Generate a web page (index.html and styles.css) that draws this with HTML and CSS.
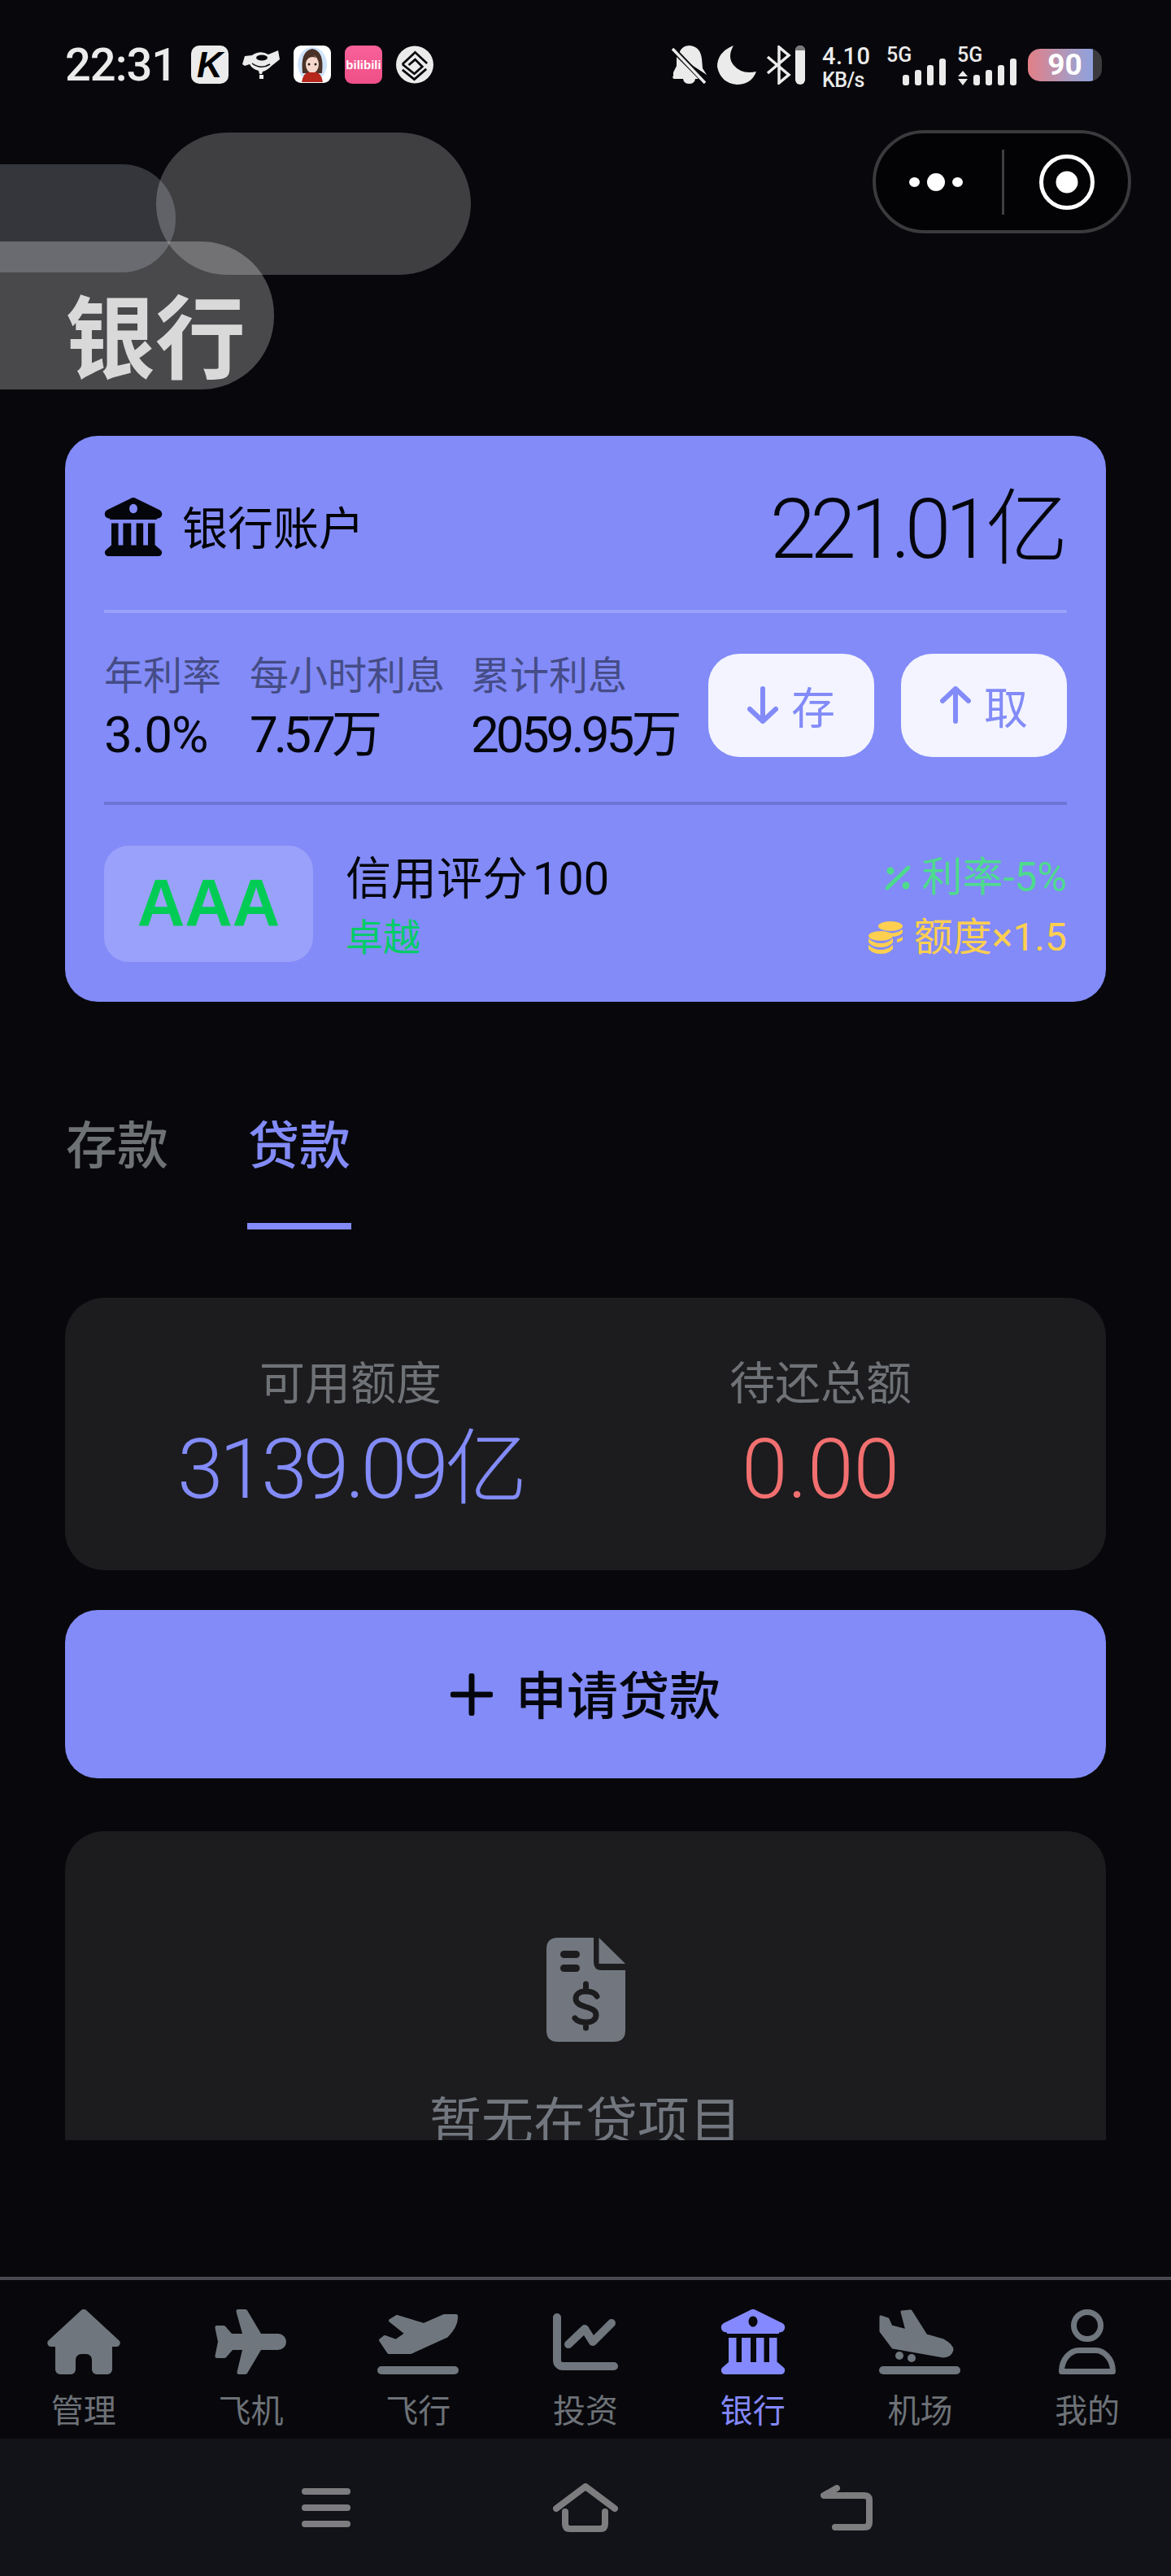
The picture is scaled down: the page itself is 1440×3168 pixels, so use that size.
FILE: index.html
```html
<!DOCTYPE html>
<html lang="zh-CN">
<head>
<meta charset="utf-8">
<title>银行</title>
<link rel="stylesheet" href="styles.css">
</head>
<body>
<svg class="defs" width="0" height="0" aria-hidden="true">
  <symbol id="bank" viewBox="0 0 80 80">
    <path fill-rule="evenodd" d="M37 .8a6 6 0 0 1 6 0L76 17a6 6 0 0 1-1 11l-3 .5V30H8v-1.500l-3-.5a6 6 0 0 1-1-11ZM40 8.500a5.500 6.500 0 1 0 .01 0Z"/>
    <rect x="10" y="35" width="9.500" height="31"/><rect x="26" y="35" width="11" height="31"/><rect x="44" y="35" width="9.500" height="31"/><rect x="60" y="35" width="9.500" height="31"/>
    <path d="M10 65h60l7 6a5 5 0 0 1-2 9H5a5 5 0 0 1-2-9Z"/>
  </symbol>
</svg>
<div class="page">
  <div class="blob blob-a"></div>
  <div class="blob blob-b"></div>
  <div class="blob blob-c"></div>

  <div class="status">
    <div class="status-left">
      <span class="time">22:31</span>
      <span class="app app-k">K</span>
      <svg class="app" viewBox="0 0 46 47"><path class="white" d="M0 23 3 13l9-1q10-7 20-1L44 6l2 11-10 8q-6 6-11 7l-1 3h-3l-1-4q-8-2-11-8l-6 2Z"/><ellipse cx="24" cy="15" rx="7" ry="3.500" fill="#08080c"/><path d="M12 22q11 8 22 1" stroke="#08080c" stroke-width="1.500" fill="none"/><rect x="21" y="36" width="5" height="5" class="white"/></svg>
      <svg class="app" viewBox="0 0 46 47"><rect width="46" height="46" rx="9" fill="#fff"/><ellipse cx="23" cy="23" rx="18" ry="21" fill="#cfe4fb"/><path d="M11 34Q8 6 23 4q15 2 12 30Z" fill="#4a3228"/><ellipse cx="23" cy="23" rx="8" ry="11" fill="#f6d7cb"/><path d="M15 13q8-4 12 1 3 3 4 7-1-7-8-7-5 0-8 6Z" fill="#4a3228"/><circle cx="19" cy="23" r="1.500" fill="#222"/><circle cx="27" cy="23" r="1.500" fill="#222"/><path d="M10 45q2-12 9-12h8q7 0 9 12Z" fill="#b5261c"/></svg>
      <span class="app app-bili">bilibili</span>
      <svg class="app" viewBox="0 0 47 47"><ellipse cx="23.500" cy="23.500" rx="23.500" ry="23.500" fill="#ebebeb"/><g fill="none" stroke="#08080c" stroke-width="2.800" stroke-linejoin="miter"><path d="M8 23 24 8 39 22"/><path d="M8 23 23 35 33 26 24 17 16 24"/><path d="M8 30 23 42 38 29"/></g></svg>
    </div>
    <div class="status-right">
      <svg class="ic-bell" viewBox="0 0 43 47"><path class="white" d="M8 13Q11 0 22 0q13 1 15 16l1 12 5 8Zm-6 20 4-8 0-11 27 27H3q-3-1-1-4Z"/><path class="white" d="M14 41h15q-1 6-7.500 6T14 41Z"/><path d="M1 3 41 45" stroke="#08080c" stroke-width="6"/><path d="M1 4 41 46" stroke="#ebebeb" stroke-width="3.500"/></svg>
      <svg class="ic-moon" viewBox="0 0 48 48"><path class="white" d="M20 0Q12 14 20 24q10 12 28 8Q42 48 24 48 4 46 0 26 0 8 20 0Z"/></svg>
      <svg class="ic-bt" viewBox="0 0 48 48"><path d="M2 14 28 36 16 46V2l12 10L2 34" fill="none" stroke="#ebebeb" stroke-width="3.500"/><rect x="36" y="0" width="12" height="48" rx="6" fill="#ebebeb"/><path d="M36 6a6 6 0 0 1 12 0Z" fill="#777"/></svg>
      <div class="speed"><span class="speed-num">4.10</span><span class="speed-unit">KB/s</span></div>
      <div class="net net-a">
        <span class="net-label">5G</span>
        <svg class="bars" width="53" height="33" viewBox="0 0 53 33"><rect y="20" width="8" height="13" rx="3"/><rect x="15" y="14" width="8" height="19" rx="3"/><rect x="30" y="8" width="8" height="25" rx="3"/><rect x="45" width="8" height="33" rx="3"/></svg>
      </div>
      <div class="net net-b">
        <span class="net-label">5G</span>
        <svg class="bars" width="73" height="33" viewBox="0 0 73 33"><path d="M7 15 13 22H1ZM1 25H13L7 33Z"/><rect x="20" y="20" width="8" height="13" rx="3"/><rect x="35" y="14" width="8" height="19" rx="3"/><rect x="50" y="8" width="8" height="25" rx="3"/><rect x="65" width="8" height="33" rx="3"/></svg>
      </div>
      <div class="battery">90</div>
    </div>
  </div>

  <div class="header">
    <div class="capsule">
      <svg class="cap-dots" width="66" height="24" viewBox="0 0 66 24"><ellipse cx="6.500" cy="12" rx="6.500" ry="6"/><ellipse cx="33" cy="12" rx="11" ry="11"/><ellipse cx="59.500" cy="12" rx="6.500" ry="6"/></svg>
      <span class="cap-line"></span>
      <svg class="cap-target" width="70" height="70" viewBox="0 0 70 70"><circle cx="35" cy="35" r="31.500" fill="none" stroke="#fff" stroke-width="5"/><circle cx="35" cy="35" r="13.500" fill="#fff"/></svg>
    </div>
    <h1 class="title">银行</h1>
  </div>

  <main class="main">
    <section class="account">
      <div class="acc-head">
        <div class="acc-name">
          <svg class="acc-icon"><use href="#bank"/></svg>
          <span class="acc-title">银行账户</span>
        </div>
        <div class="acc-amount">221.01亿</div>
      </div>
      <div class="acc-stats">
        <div class="stat stat-1"><span class="stat-label">年利率</span><span class="stat-value">3.0%</span></div>
        <div class="stat stat-2"><span class="stat-label">每小时利息</span><span class="stat-value">7.57万</span></div>
        <div class="stat stat-3"><span class="stat-label">累计利息</span><span class="stat-value">2059.95万</span></div>
        <div class="acc-btns">
          <div class="acc-btn">
            <svg width="38" height="46" viewBox="0 0 38 46"><path d="M19 3V43M3 28 19 43 35 28" fill="none" stroke="currentColor" stroke-width="6" stroke-linecap="round" stroke-linejoin="round"/></svg>
            <span>存</span>
          </div>
          <div class="acc-btn">
            <svg width="38" height="46" viewBox="0 0 38 46"><path d="M19 43V3M3 18 19 3 35 18" fill="none" stroke="currentColor" stroke-width="6" stroke-linecap="round" stroke-linejoin="round"/></svg>
            <span>取</span>
          </div>
        </div>
      </div>
      <div class="acc-credit">
        <div class="grade">AAA</div>
        <div class="credit-info">
          <span class="credit-score">信用评分 100</span>
          <span class="credit-rank">卓越</span>
        </div>
        <div class="perks">
          <div class="perk perk-green">
            <svg width="30" height="30" viewBox="0 0 30 30"><path d="M2 27 28 2" stroke="currentColor" stroke-width="5" stroke-linecap="round"/><circle cx="6" cy="6" r="4.500" fill="currentColor"/><circle cx="25" cy="24" r="4.500" fill="currentColor"/></svg>
            <span>利率-5%</span>
          </div>
          <div class="perk perk-yellow">
            <svg width="42" height="40" viewBox="0 0 42 40"><g fill="currentColor"><ellipse cx="27" cy="6" rx="15" ry="6"/><path d="M22 14q5 1 10 0 6-1 10-4v4q-3 4-11 5-3-3-9-5Zm13 8q4-1 7-3v4q-2 2-7 3Z"/><ellipse cx="15" cy="18" rx="15" ry="6"/><path d="M0 21q6 6 15 6t15-6v5q-5 6-15 6T0 26Zm0 8q6 6 15 6t15-6v5q-5 6-15 6T0 34Z"/></g></svg>
            <span>额度×1.5</span>
          </div>
        </div>
      </div>
    </section>

    <div class="tabs">
      <div class="tab"><span class="tab-text">存款</span><span class="tab-bar"></span></div>
      <div class="tab tab-on"><span class="tab-text">贷款</span><span class="tab-bar"></span></div>
    </div>

    <section class="summary">
      <div class="sum-col"><span class="sum-label">可用额度</span><span class="sum-value sum-blue">3139.09亿</span></div>
      <div class="sum-col"><span class="sum-label">待还总额</span><span class="sum-value sum-red">0.00</span></div>
    </section>

    <div class="apply">
      <svg width="52" height="52" viewBox="0 0 52 52"><path d="M26 3V49M3 26H49" stroke="currentColor" stroke-width="7" stroke-linecap="round"/></svg>
      <span>申请贷款</span>
    </div>

    <section class="empty">
      <svg class="empty-icon" width="97" height="128" viewBox="0 0 97 128">
        <path fill="#72777f" d="M14 0H58V30q0 10 10 10H97V114q0 14-14 14H14Q0 128 0 114V14Q0 0 14 0ZM64.500 0 97 32H64.500Z"/>
        <rect x="17" y="16" width="24" height="9" rx="4.500" fill="#1c1c1e"/><rect x="17" y="33" width="24" height="9" rx="4.500" fill="#1c1c1e"/>
        <path d="M62 72C60 68 55 66 48 66 40 66 36 70 36 75 36 81 42 83 48 85 55 87 61 89 61 95 61 101 56 104 49 104 42 104 37 102 35 99M48.500 57V66M48.500 104V111" fill="none" stroke="#1c1c1e" stroke-width="7" stroke-linecap="round"/>
      </svg>
      <div class="empty-text">暂无在贷项目</div>
    </section>
  </main>

  <nav class="nav">
    <div class="nav-item">
      <svg class="nav-ic" width="90" height="80" viewBox="0 0 90 80"><path d="M41.500 1.500a5 5 0 0 1 7 0L88 38a4.500 4.500 0 0 1-3 8H80V74a6 6 0 0 1-6 6H61a6 6 0 0 1-6-6V62a7 7 0 0 0-7-7h-6a7 7 0 0 0-7 7V74a6 6 0 0 1-6 6H16a6 6 0 0 1-6-6V46H5a4.500 4.500 0 0 1-3-8Z"/></svg>
      <span>管理</span>
    </div>
    <div class="nav-item">
      <svg class="nav-ic" width="90" height="80" viewBox="0 0 90 80"><path d="M29 0h8q3 0 4 3L57 30H78a10 10 0 0 1 0 20H57L41 77q-1 3-4 3h-7q-3 0-2.500-3L34 50H22l-7 8q-1 2-3 2H3q-3 0-2.500-3L4 40 .5 23Q0 20 3 20h8q2 0 3 2l7 8H34L26.500 3Q26 0 29 0Z"/></svg>
      <span>飞机</span>
    </div>
    <div class="nav-item">
      <svg class="nav-ic" width="100" height="80" viewBox="0 0 100 80"><path stroke-width="4" stroke-linejoin="round" d="M16 14 24 9 57 19 82 8H97Q98 20 85 33L41 53H14L4 38 9 34 23 39 36 30Z" class="sq"/><rect y="70" width="100" height="10" rx="5"/></svg>
      <span>飞行</span>
    </div>
    <div class="nav-item">
      <svg class="nav-ic nav-line" width="80" height="80" viewBox="0 0 80 80"><path d="M5 10V63a7 7 0 0 0 7 7H75M19 43 39 24 49 40 72 17"/></svg>
      <span>投资</span>
    </div>
    <div class="nav-item nav-on">
      <svg class="nav-ic" width="80" height="80"><use href="#bank"/></svg>
      <span>银行</span>
    </div>
    <div class="nav-item">
      <svg class="nav-ic" width="100" height="80" viewBox="0 0 100 80"><path class="sq" stroke-width="3" stroke-linejoin="round" d="M2 9 11 12 15 21 34 26 28 3 39 2 58 32 79 38Q90 44 90 50 88 58 79 58L17 47 2 27Z"/><circle cx="25" cy="57" r="5"/><circle cx="40" cy="60" r="5"/><rect y="70" width="100" height="10" rx="5"/></svg>
      <span>机场</span>
    </div>
    <div class="nav-item">
      <svg class="nav-ic nav-user" width="70" height="80" viewBox="0 0 70 80"><circle cx="35" cy="20" r="16.500"/><path stroke-linejoin="round" d="M3.500 76.500C3.500 60 15 50.500 25 50.500H45C55 50.500 66.500 60 66.500 76.500Z"/></svg>
      <span>我的</span>
    </div>
  </nav>

  <div class="gesture">
    <svg class="ges-ic" width="60" height="48" viewBox="0 0 60 48"><rect width="60" height="8" rx="4"/><rect y="20" width="60" height="8" rx="4"/><rect y="40" width="60" height="8" rx="4"/></svg>
    <svg class="ges-ic ges-line" width="80" height="60" viewBox="0 0 80 60"><path d="M4 31 40 4 76 31M15 35V50q0 6 6 6H58q6 0 6-6V35"/></svg>
    <svg class="ges-ic ges-line" width="66" height="56" viewBox="0 0 66 56"><path d="M20 4 4 13H54q6 0 6 6V46q0 6-6 6H18"/></svg>
  </div>
</div>
</body>
</html>
```

FILE: styles.css
```css
* { box-sizing: border-box; }
html, body { margin: 0; padding: 0; background: #08080c; }
body { font-family: Roboto, "Noto Sans CJK SC", sans-serif; color: #000; }
.defs { display: block; height: 0; }
.white { fill: #ebebeb; }

.page {
  position: relative;
  width: 1440px;
  height: 3168px;
  overflow: hidden;
  display: flex;
  flex-direction: column;
  background: #08080c;
}

/* translucent decorations over the heading */
.blob { position: absolute; border-radius: 90px; }
.blob-a { left: 192px; top: 163px; width: 387px; height: 175px; background: rgba(255,255,255,.225); }
.blob-b { left: -150px; top: 202px; width: 366px; height: 133px; border-radius: 66px; background: rgba(232,238,255,.2); }
.blob-c { left: -150px; top: 297px; width: 487px; height: 182px; background: rgba(255,255,255,.265); }

/* status bar */
.status {
  height: 160px;
  display: flex;
  justify-content: space-between;
  padding: 56px 85px 0 80px;
  position: relative;
}
.status-left { display: flex; align-items: flex-start; gap: 17px; height: 48px; }
.time {
  color: #ebebeb;
  font-size: 56px;
  line-height: 48px;
  letter-spacing: -1px;
  font-weight: 500;
  width: 138px;
  white-space: nowrap;
}
.app { width: 46px; height: 47px; display: block; flex: none; }
.app-k {
  background: #ebebeb;
  border-radius: 10px;
  color: #000;
  font: italic 900 44px/47px "Liberation Sans", sans-serif;
  text-align: center;
}
.app-bili {
  background: linear-gradient(#f9619a, #ef4f86);
  border-radius: 9px;
  color: #fff;
  font: 700 15px/47px "Liberation Sans", sans-serif;
  text-align: center;
  overflow: hidden;
}
.status-right { display: flex; align-items: flex-start; height: 50px; }
.ic-bell { width: 43px; height: 47px; display: block; }
.ic-moon { width: 48px; height: 48px; display: block; margin-left: 13px; }
.ic-bt { width: 48px; height: 48px; display: block; margin-left: 12px; }
.speed { display: flex; flex-direction: column; color: #ebebeb; margin-left: 21px; width: 58px; font-weight: 500; }
.speed-num { font-size: 29px; line-height: 26px; letter-spacing: .5px; }
.speed-unit { font-size: 25px; line-height: 24px; letter-spacing: -.6px; margin-top: 5px; }
.net { display: grid; width: 73px; height: 49px; }
.net-a { margin-left: 21px; }
.net-b { margin-left: 14px; }
.net-label {
  grid-area: 1 / 1;
  justify-self: start;
  color: #ebebeb;
  font-size: 25px;
  line-height: 24px;
  font-weight: 500;
}
.bars { grid-area: 1 / 1; justify-self: end; align-self: end; fill: #ebebeb; display: block; }
.battery {
  width: 91px;
  height: 40px;
  margin: 4px 0 0 14px;
  border-radius: 15px;
  background: linear-gradient(90deg, #e27f87 0, #a79cc4 60%, #8fa0dd 88%, #3b3b3e 88%);
  color: #fff;
  font-size: 37px;
  font-weight: 700;
  line-height: 40px;
  text-align: center;
}

/* header */
.header { display: flex; flex-direction: column; height: 376px; position: relative; }
.capsule {
  align-self: flex-end;
  margin-right: 49px;
  width: 318px;
  height: 127px;
  border: 4px solid #3a3a3c;
  border-radius: 64px;
  background: #030305;
  display: flex;
  align-items: center;
  padding-left: 41px;
}
.cap-dots { fill: #fff; display: block; }
.cap-line { width: 3px; height: 80px; background: #3f3f41; margin-left: 48px; }
.cap-target { display: block; margin-left: 42px; }
.title {
  margin: 57px 0 0 80px;
  font-family: "Noto Sans CJK SC", sans-serif;
  font-size: 111px;
  line-height: 130px;
  font-weight: 700;
  color: #d9d9d9;
  position: relative;
}

/* main */
.main {
  height: 2096px;
  margin-bottom: 168px;
  padding: 0 80px;
  overflow: hidden;
  flex: none;
}
.account { height: 696px; border-radius: 40px; background: #828bf7; padding: 0 48px; display: flex; flex-direction: column; }
.acc-head {
  height: 218px;
  padding-top: 10px;
  border-bottom: 4px solid #99a1fb;
  display: flex;
  align-items: center;
  justify-content: space-between;
  flex: none;
}
.acc-name { display: flex; align-items: center; gap: 24px; }
.acc-title { font-size: 56px; line-height: 70px; padding-top: 6px; }
.acc-icon { width: 72px; height: 72px; display: block; fill: #05060c; }
.acc-amount { font-size: 102px; font-weight: 300; letter-spacing: -7px; line-height: 120px; color: #05060c; margin-right: 5px; padding-top: 6px; }
.acc-stats {
  height: 236px;
  border-bottom: 4px solid #6d75d6;
  display: flex;
  align-items: center;
  gap: 37px;
  padding-bottom: 6px;
  flex: none;
}
.stat { display: flex; flex-direction: column; flex: none; margin-top: 8px; }
.stat-label { font-size: 48px; line-height: 66px; color: #454c86; white-space: nowrap; }
.stat-value { font-size: 62px; line-height: 78px; color: #05060c; letter-spacing: -3.500px; white-space: nowrap; }
.stat-1 { width: 142px; }
.stat-1 .stat-value { letter-spacing: -1px; }
.stat-2 { width: 235px; }
.stat-2 .stat-value { letter-spacing: -5px; }
.stat-3 { width: 250px; }
.stat-3 .stat-value { letter-spacing: -4px; }
.acc-btns { display: flex; gap: 33px; margin-left: auto; }
.acc-btn {
  width: 204px;
  height: 127px;
  border-radius: 38px;
  background: #f3f4ff;
  color: #828bf7;
  font-size: 54px;
  display: flex;
  align-items: center;
  justify-content: center;
  gap: 16px;
}
.acc-credit { flex: 1; display: flex; align-items: center; }
.grade {
  width: 257px;
  height: 143px;
  border-radius: 30px;
  background: #9aa1fa;
  color: #00cc55;
  font: 700 81px/141px "Liberation Sans", sans-serif;
  text-align: center;
}
.credit-info { display: flex; flex-direction: column; margin: 10px 0 0 40px; }
.credit-score { font-size: 56px; line-height: 74px; color: #05060c; word-spacing: -8px; }
.credit-rank { font-size: 46px; line-height: 70px; color: #00cc66; }
.perks { margin: 10px 0 0 auto; display: flex; flex-direction: column; align-items: flex-end; gap: 6px; }
.perk { display: flex; align-items: center; gap: 14px; line-height: 67px; white-space: nowrap; }
.perk svg { display: block; }
.perk-green { color: #4edb8d; font-size: 50px; }
.perk-yellow { color: #ffcf50; font-size: 48px; }

/* tabs */
.tabs { display: flex; gap: 96px; padding-top: 133px; }
.tab { width: 128px; display: flex; flex-direction: column; align-items: center; color: #6f7274; }
.tab-text { font-size: 63px; line-height: 90px; font-weight: 500; white-space: nowrap; }
.tab-bar { width: 100%; height: 8px; margin-top: 49px; }
.tab-on { color: #828bf7; }
.tab-on .tab-bar { background: #828bf7; }

/* summary */
.summary {
  margin-top: 84px;
  height: 335px;
  border-radius: 48px;
  background: #1c1c1e;
  display: grid;
  grid-template-columns: 1fr 1fr;
  align-content: center;
  padding: 6px 62px 0;
}
.sum-col { display: flex; flex-direction: column; align-items: center; gap: 10px; }
.sum-label { font-size: 56px; line-height: 70px; color: #6f7276; }
.sum-value { font-size: 102px; line-height: 120px; font-weight: 300; letter-spacing: -5px; white-space: nowrap; }
.sum-blue { color: #828bf7; }
.sum-red { color: #f26f70; letter-spacing: 0; }

/* apply */
.apply {
  margin-top: 49px;
  height: 207px;
  border-radius: 40px;
  background: #828bf7;
  display: flex;
  align-items: center;
  justify-content: center;
  gap: 28px;
  font-size: 63px;
  color: #05060c;
  font-weight: 500;
}
.apply svg { display: block; }
.apply span { padding-bottom: 6px; }

/* empty */
.empty {
  margin-top: 65px;
  height: 600px;
  border-radius: 48px;
  background: #1c1c1e;
  padding-top: 131px;
  display: flex;
  flex-direction: column;
  align-items: center;
}
.empty-icon { display: block; flex: none; }
.empty-text { margin-top: 55px; font-size: 64px; line-height: 90px; color: #72777f; }

/* nav */
.nav {
  height: 199px;
  border-top: 4px solid #4a4850;
  display: grid;
  grid-template-columns: repeat(7, 1fr);
  padding-top: 36px;
  background: #08080c;
  flex: none;
}
.nav-item { display: flex; flex-direction: column; align-items: center; gap: 22px; color: #6d7278; font-size: 40px; line-height: 48px; }
.nav-ic { display: block; fill: #6f767e; }
.nav-ic .sq { stroke: #6f767e; }
.nav-line { fill: none; stroke: #6f767e; stroke-width: 10; stroke-linecap: round; stroke-linejoin: round; }
.nav-user { fill: none; stroke: #6f767e; stroke-width: 7; }
.nav-on { color: #8489ff; }
.nav-on .nav-ic { fill: #8489ff; }

/* gesture bar */
.gesture {
  flex: 1;
  background: #111318;
  display: flex;
  align-items: center;
  justify-content: center;
  gap: 249px;
  padding-left: 6px;
}
.ges-ic { display: block; fill: #7d7d7f; }
.ges-line { fill: none; stroke: #7d7d7f; stroke-width: 8; stroke-linecap: round; stroke-linejoin: round; }
```
